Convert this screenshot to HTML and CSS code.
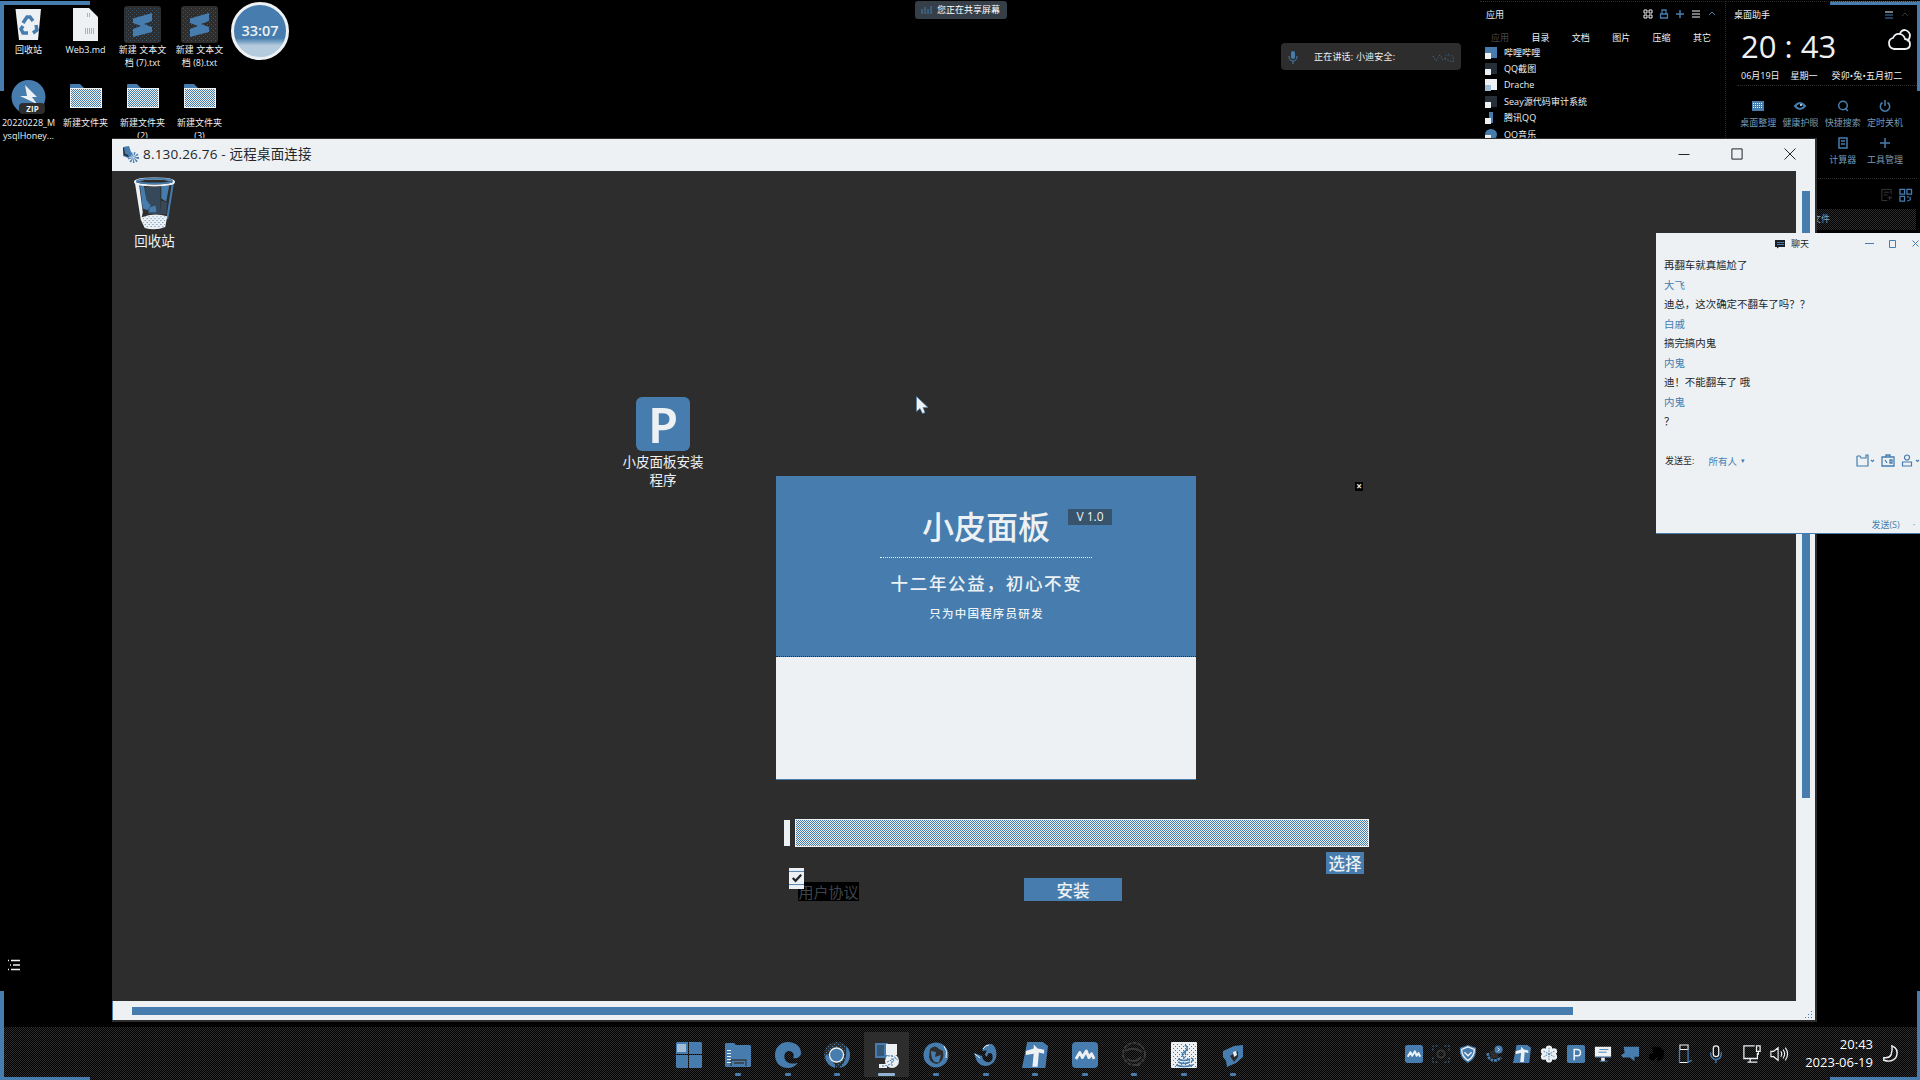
FILE: index.html
```html
<!DOCTYPE html>
<html lang="zh-CN">
<head>
<meta charset="utf-8">
<title>桌面</title>
<link rel="stylesheet" href="styles.css">
</head>
<body>
<svg width="0" height="0" class="defs">
  <pattern id="dots" width="2" height="2" patternUnits="userSpaceOnUse"><path fill="#467dae" d="M0 0h1v1H0zM1 1h1v1H1z"/></pattern>
  <pattern id="gdots" width="4" height="4" patternUnits="userSpaceOnUse"><path fill="#467dae" d="M0 0h1v1H0zM2 2h1v1H2z"/></pattern>
  <symbol id="folder" viewBox="0 0 34 26"><path class="b" d="M1 2q0-1 1-1h9l4 4h17v4H1z"/><path class="w" d="M1 5h32v20H1z"/><path fill="url(#dots)" d="M2 6h30v18H2z"/></symbol>
  <symbol id="subl" viewBox="0 0 37 37"><rect class="g" width="37" height="37" rx="3"/><rect fill="url(#gdots)" x="2" y="2" width="33" height="33" opacity=".5"/><path class="b" d="M9 12.500L28 7v8l-8 3 8 3v5L9 31v-8l8-3-8-3z"/></symbol>
  <symbol id="tool" viewBox="0 0 20 20"><path class="b" d="M4 0h12l4 3-2 17H0z"/><path class="w" d="M3 7l6-2V2l3 3 5 1v3l-4-1-1 11H8l1-10-6 1z"/></symbol>
  <symbol id="meet" viewBox="0 0 20 20"><rect class="b" width="20" height="20" rx="3"/><path fill="none" stroke="#edf1f4" stroke-width="2.200" stroke-linejoin="round" d="M3 13l3-5 2 4 3-5 2 5 2-3 2 4"/></symbol>
</svg>

<main class="desktop">
  <i class="corner tl"></i><i class="corner tr"></i>

  <section class="shortcuts">
    <div class="shortcut"><svg viewBox="0 0 37 37"><path class="w" d="M5.500 3L31 3l-3 31H9z"/><path class="ln" stroke-width="3.500" d="M13 17l4-6h3l3 4M26 19l1 5-4 3M18 27h-5l-2-4 2-3"/></svg><span>回收站</span></div>
    <div class="shortcut"><svg viewBox="0 0 37 37"><path class="w" d="M6 2h16l9 9v24H6z"/><path class="ln" stroke-width="1" stroke-dasharray="1 1" d="M20 8h4M20 10h4M18 23h9M18 25h9M18 27h9"/></svg><span>Web3.md</span></div>
    <div class="shortcut"><svg><use href="#subl"/></svg><span>新建 文本文档 (7).txt</span></div>
    <div class="shortcut"><svg><use href="#subl"/></svg><span>新建 文本文档 (8).txt</span></div>
    <div class="shortcut"><svg viewBox="0 0 37 37"><circle class="b" cx="18.500" cy="18" r="17"/><path class="w" d="M15 6l12 12h-5l5 7-17-8h7z"/><rect class="g" x="9" y="24" width="26" height="11" rx="4"/><text x="22.500" y="32.500" class="zip">ZIP</text></svg><span>20220228_M<br>ysqlHoney...</span></div>
    <div class="shortcut"><svg class="fold"><use href="#folder"/></svg><span>新建文件夹</span></div>
    <div class="shortcut"><svg class="fold"><use href="#folder"/></svg><span>新建文件夹<br>(2)</span></div>
    <div class="shortcut"><svg class="fold"><use href="#folder"/></svg><span>新建文件夹<br>(3)</span></div>
  </section>
  <div class="timer">33:07</div>
  <div class="sharing"><svg viewBox="0 0 12 10"><path class="ln" d="M1 4v5M4 2v7M7 4v5M10 1v8"/></svg><span>您正在共享屏幕</span></div>
  <div class="speaking"><svg viewBox="0 0 10 14"><rect class="b" x="3" y="1" width="4" height="8" rx="2"/><path class="ln" d="M1 6q0 5 4 5t4-5M5 11v3"/></svg><span>正在讲话: 小迪安全:</span><svg class="wave" viewBox="0 0 24 12"><path class="ln" stroke-dasharray="1 2" d="M1 5l3 5 4-6 3 5M13 8q0-5 5-4t3 7z"/></svg></div>

  <section class="apps">
    <header><b>应用</b>
      <svg viewBox="0 0 10 10"><path class="lw" d="M1 1h3v3H1zM6 1h3v3H6zM1 6h3v3H1zM6 6h3v3H6z"/></svg>
      <svg viewBox="0 0 10 10"><path class="ln" stroke-width="1.300" d="M1.500 5h7v4h-7zM3 5V1h4v4"/></svg>
      <svg viewBox="0 0 10 10"><path class="ln" stroke-width="1.500" d="M5 1v8M1 5h8"/></svg>
      <svg viewBox="0 0 10 10"><path class="lw" d="M1 2h8M1 5h8M1 8h8"/></svg>
      <svg viewBox="0 0 10 10"><path class="ln" d="M2 6l3-3 3 3"/></svg>
    </header>
    <nav><span class="dim">应用</span><span>目录</span><span>文档</span><span>图片</span><span>压缩</span><span>其它</span></nav>
    <ul>
      <li><i class="app blue"></i>哔哩哔哩</li>
      <li><i class="app dark"></i>QQ截图</li>
      <li><i class="app white"></i>Drache</li>
      <li><i class="app dark"></i>Seay源代码审计系统</li>
      <li><i class="app penguin"></i>腾讯QQ</li>
      <li><i class="app round"></i>QQ音乐</li>
    </ul>
  </section>

  <section class="helper">
    <header><b>桌面助手</b>
      <svg viewBox="0 0 10 10"><path class="lw" d="M1 2h8"/><path class="ln" d="M1 5h8M1 8h8"/></svg>
      <svg viewBox="0 0 10 10"><path class="lg" d="M2 6l3-3 3 3"/></svg>
    </header>
    <div class="now"><span>20 : 43</span><svg viewBox="0 0 26 22"><path class="lw" stroke-width="1.800" d="M7 20q-5-1-5-6 0-4 4-5 2-5 7-4 4 1 5 5 5 1 5 5 0 5-5 5zM13 5q1-4 5-4 4 1 5 5 0 4-3 6"/></svg></div>
    <div class="date"><span>06月19日</span><span>星期一</span><span>癸卯•兔•五月初二</span></div>
    <div class="tools">
      <div><svg viewBox="0 0 12 12"><path class="b" d="M0 1h12v10H0z"/><path class="lw" stroke-dasharray="1 1" d="M1 3.500h10M1 5.500h10M1 7.500h10"/></svg>桌面整理</div>
      <div><svg viewBox="0 0 12 12"><path class="ln" stroke-width="2" d="M1 6q5-6 10 0-5 6-10 0z"/><circle cx="7" cy="5" r="1" class="w"/></svg>健康护眼</div>
      <div><svg viewBox="0 0 12 12"><circle class="ln" stroke-width="1.500" cx="6" cy="5.500" r="4.300"/><path class="ln" stroke-width="1.500" d="M8 8l3 3"/></svg>快捷搜索</div>
      <div><svg viewBox="0 0 12 12"><path class="ln" stroke-width="1.500" d="M3.500 2.500a4.700 4.700 0 1 0 5 0M6 0v6"/></svg>定时关机</div>
      <div></div><div></div>
      <div><svg viewBox="0 0 12 12"><path class="ln" stroke-width="1.500" d="M2 1h8v10H2zM4 4h4M4 7h4"/></svg>计算器</div>
      <div><svg viewBox="0 0 12 12"><path class="ln" stroke-width="1.500" d="M6 1v10M1 6h10"/></svg>工具管理</div>
    </div>
    <div class="mini">
      <svg viewBox="0 0 14 14"><path class="lg" d="M12 6V1H2v12h6M4 4h6M4 7h4M8 10h5M10.500 8v5"/></svg>
      <svg viewBox="0 0 14 14"><path class="ln" stroke-width="1.400" d="M1 1h5v5H1zM8.500 1h5v5h-5zM1 8.500h5v5H1zM8.500 9h2M12 9v4M9 13h2"/></svg>
    </div>
    <div class="search">文件</div>
  </section>

  <section class="remote">
    <header class="titlebar">
      <svg class="rdp" viewBox="0 0 17 17"><path class="b" d="M1 1l6-1 3 9-4 3-5-2z"/><path class="k" d="M1 2l1 7 5 2-1-2-3-1-1-6z"/><circle class="ln" stroke-width="5" stroke-dasharray="1 1" cx="11.500" cy="11.500" r="3"/></svg>
      <h1>8.130.26.76 - 远程桌面连接</h1>
      <div class="winbtns">
        <svg viewBox="0 0 12 12"><path class="lk" d="M.500 6.500h11"/></svg>
        <svg viewBox="0 0 12 12"><path class="lk" d="M.900.900h10.200v10.200H.900z"/></svg>
        <svg viewBox="0 0 12 12"><path class="lk" d="M.500.500l11 11M11.500.500l-11 11"/></svg>
      </div>
    </header>
    <div class="screen">
      <div class="rbin"><svg viewBox="0 0 44 54"><path class="g" d="M2 4h40l-7 47-11 3-14-3z"/><path class="lb2" d="M41 5l-6 38"/><path class="w" d="M2 6h4l4 30-1 5q12-5 26-1l-2 11q-10 4-21 1l-4-8z"/><path class="b" d="M7 8h4l3 16 4 5-3 5-5-2zM29 9h8l-3 16-5-3zM17 31l6-2 1 7h-8z"/><path fill="url(#dots)" opacity=".7" d="M12 10h16v28H16zM29 24l6 2-1 12h-6z"/><path fill="url(#gdots)" d="M9 40h25l-2 12H12z"/><ellipse class="lw" stroke-width="2" cx="22" cy="5" rx="20" ry="3.500"/><ellipse class="ln" stroke-width="1.800" cx="22" cy="4" rx="18" ry="2.500"/></svg><span>回收站</span></div>
      <div class="setup"><div class="plogo">P</div><span>小皮面板安装<br>程序</span></div>
      <svg class="cursor" viewBox="0 0 12 18"><path class="w" stroke="#467dae" stroke-width=".6" d="M.500.500v15l3.500-3 2.500 5 2.500-1-2-5h5z"/></svg>
      <div class="banner">
        <div class="hero">
          <div class="brand">小皮面板<em>V 1.0</em></div>
          <div class="rule"></div>
          <p class="slogan">十二年公益，初心不变</p>
          <p class="sub">只为中国程序员研发</p>
        </div>
        <div class="pane"></div>
      </div>
      <div class="closex">×</div>
      <div class="path"><i></i><b></b></div>
      <div class="pick">选择</div>
      <div class="agree">用户协议</div>
      <div class="check"><svg viewBox="0 0 16 21"><path class="ln" d="M0 3.500h16M0 17.500h16"/><path class="lk" stroke-width="2.400" d="M4 10.500l3 3 6-6.500"/></svg></div>
      <div class="install">安装</div>
    </div>
    <div class="vbar"><i></i></div>
    <div class="hbar"><i></i></div>
    <svg class="grip" viewBox="0 0 8 8"><path class="b" d="M6 0h1v1H6zM3 3h1v1H3zM6 3h1v1H6zM0 6h1v1H0zM3 6h1v1H3zM6 6h1v1H6z"/></svg>
  </section>

  <section class="chat">
    <header><svg viewBox="0 0 10 10"><path class="k" d="M0 1h10v7H4L2 9.500V8H0z"/><path stroke="#467dae" d="M2 3.500h7M2 5.500h7"/></svg><span>聊天</span>
      <div class="cbtns"><svg viewBox="0 0 9 9"><path class="ln" d="M0 4.500h9"/></svg><svg viewBox="0 0 9 9"><path class="ln" d="M1.500 1.500h6v7h-6z"/></svg><svg viewBox="0 0 9 9"><path class="ln" d="M1.500 1.500l6 6M7.500 1.500l-6 6"/></svg></div>
    </header>
    <div class="log">
      <p>再翻车就真尴尬了</p><p class="who">大飞</p>
      <p>迪总，这次确定不翻车了吗？？</p><p class="who">白戚</p>
      <p>搞完搞内鬼</p><p class="who">内鬼</p>
      <p>迪！不能翻车了 哦</p><p class="who">内鬼</p>
      <p>？</p>
    </div>
    <div class="to"><span>发送至:</span><span class="who">所有人</span><small>▾</small>
      <svg class="push" viewBox="0 0 20 13"><path class="ln" stroke-width="1.200" d="M1 2h3l1 2h5V1h2v2M1 2v10h11V3M15 6l1.500 1.500L18 6"/></svg>
      <svg class="mid" viewBox="0 0 14 13"><path class="ln" stroke-width="1.300" d="M1 3h12v9H1zM5 3V1h4v2M4 6l2 3M9 6h2v3H9z"/></svg>
      <svg viewBox="0 0 20 13"><circle class="ln" stroke-width="1.200" cx="6" cy="3.500" r="2.500"/><path class="ln" stroke-width="1.200" d="M1.500 12V8h9v4zM15 6l1.500 1.500L18 6"/></svg>
    </div>
    <div class="send who">发送(S)<i>·</i></div>
  </section>

  <svg class="listicon" viewBox="0 0 14 12"><path class="lw" stroke-width="1.500" d="M1 1.500h1M4 1.500h9M3 6h1M6 6h7M1 10.500h1M4 10.500h9"/></svg>

  <footer class="taskbar">
    <div class="pins">
      <div class="pin nodot"><svg viewBox="0 0 26 26"><path class="b" d="M0 1l1-1h11v12H0zM13 0h12l1 1v11H13zM0 13h12v13H1l-1-1zM13 13h13v12l-1 1H13z"/><path class="wd" d="M1 2h9v8H1z"/></svg></div>
      <div class="pin"><svg viewBox="0 0 26 26"><path class="b" d="M0 2l1-1h8l2 2h14l1 1v20l-1 1H1l-1-1z"/><path class="lg" stroke-width="1.300" d="M6 24v-6h15v6M9 21h10"/><path stroke="#edf1f4" stroke-width="4" stroke-dasharray="1 2" d="M4 8v14"/></svg></div>
      <div class="pin"><svg viewBox="0 0 26 26"><path class="b" d="M13 0c8 0 13 5 13 11 0 4-4 6-8 5 2-3 0-7-4-7-5 0-6 7-3 10 3 3 7 3 12 2-3 3-6 5-10 5C5 26 0 20 0 13S5 0 13 0z"/></svg></div>
      <div class="pin"><svg viewBox="0 0 26 26"><circle class="g" cx="13" cy="13" r="13"/><circle fill="url(#gdots)" cx="13" cy="13" r="13"/><path class="b" d="M22 4a13 13 0 0 1-6 22q8-8 6-22zM3 12l8 11v3Q2 23 1 14z"/><circle cx="12.500" cy="13" r="7" fill="#467dae" stroke="#edf1f4" stroke-width="1.300"/></svg></div>
      <div class="pin active"><svg viewBox="0 0 26 26"><path class="b" d="M1 1h13v15H1z"/><path class="k" d="M3 3h7v11H3z" opacity=".4"/><path class="w" d="M12 2h11v11H12z"/><circle class="w" cx="18" cy="19" r="7"/><path class="w" d="M5 22h8v4H5z"/><path class="ln" stroke-dasharray="2 1" d="M14 14q7-1 10 5M13 20l9-4M8 24q9 0 12-6M18 13v12"/></svg></div>
      <div class="pin"><svg viewBox="0 0 26 26"><circle class="b" cx="13" cy="13" r="12.500"/><path class="g" d="M7 7q5-5 9 0l4 2q2 10-6 13-7-1-8-7z"/><path class="b" d="M8 9l5 1-1 5 6-2-2 7q-8 2-8-11z"/><path class="lw" d="M21 4q4 5 2 12"/></svg></div>
      <div class="pin"><svg viewBox="0 0 26 26"><path class="b" d="M9 9q2-8 10-7 6 5 4 14-3 8-11 8-7-1-9-7L1 11l8 3q1 7 8 6 4-3 2-8-4-3-5 3l-2-2q1-6 6-5"/><path class="lw" d="M10 7q2-4 6-4M2 12l5 4"/></svg></div>
      <div class="pin"><svg viewBox="0 0 20 20"><use href="#tool"/></svg></div>
      <div class="pin"><svg viewBox="0 0 20 20"><use href="#meet"/></svg></div>
      <div class="pin"><svg viewBox="0 0 26 26"><circle class="lg" stroke-width="2" stroke-dasharray="4 1" cx="13" cy="12" r="11"/><path class="lg" stroke-width="2" d="M4 9q9-5 17 1M6 17q8 5 14-2M12 23h7"/></svg></div>
      <div class="pin"><svg viewBox="0 0 26 26"><rect class="w" width="26" height="26" rx="1"/><path fill="url(#gdots)" d="M1 1h24v24H1z"/><path class="ln" stroke-width="1.500" d="M14 3q5 3-1 7-4 3 1 6M17 7q-5 3-2 6M7 17q6 3 12 0M7 20q6 3 12 0M5 23q8 3 17 0M20 16q4 1 0 4"/></svg></div>
      <div class="pin"><svg viewBox="0 0 26 26"><path class="b" d="M3 9l11-5 9-1v12l-7 6-9 4-1-6-3-4z"/><path class="g" d="M10 14l8-5v6l-4 5z"/><path class="w" d="M13 10l3-1 1 4-3 2z"/></svg></div>
    </div>
    <div class="tray">
      <svg viewBox="0 0 20 20"><use href="#meet"/></svg>
      <svg viewBox="0 0 20 20"><path class="ln" stroke-dasharray="2 2" d="M1 6V1h5M14 1h5v5M19 14v5h-5M6 19H1v-5"/><circle class="lg" stroke-width="2" cx="10" cy="10" r="4"/></svg>
      <svg viewBox="0 0 20 20"><path class="b" d="M10 0l9 3q1 12-9 17Q0 15 1 3z"/><path class="lw" stroke-width="1.500" d="M10 2l7 3q0 8-7 12Q3 13 3 5zM6 8l4 4 4-4"/></svg>
      <svg viewBox="0 0 20 20"><path class="ln" stroke-width="3" stroke-dasharray="3 1" d="M2 9q0 9 10 8l5-3"/><path class="g" d="M4 7l8-2 2 9-8 1z"/><circle class="b" cx="14" cy="5" r="4.500"/><path class="lw" d="M13 3l2 2-2 2"/></svg>
      <svg viewBox="0 0 20 20"><use href="#tool"/></svg>
      <svg viewBox="0 0 20 20"><g class="w"><circle cx="10" cy="4" r="3.500"/><circle cx="10" cy="16" r="3.500"/><circle cx="4.500" cy="7" r="3.500"/><circle cx="15.500" cy="7" r="3.500"/><circle cx="4.500" cy="13" r="3.500"/><circle cx="15.500" cy="13" r="3.500"/></g><circle class="w" cx="10" cy="10" r="5"/><path class="ln" stroke-dasharray="2 1" d="M10 3v14M4 7l12 6M16 7L4 13"/></svg>
      <svg viewBox="0 0 20 20"><rect class="b" width="20" height="20" rx="2"/><path class="lw" stroke-width="1.700" d="M8 17V5h3q4 0 4 3.500T11 12H8"/></svg>
      <svg viewBox="0 0 20 20"><path class="w" d="M1 2h18v11H1zM8 14h4v4H8z"/><path class="ln" d="M1 13.500h18M6 5h10M5 8h9M6 18h9"/></svg>
      <svg viewBox="0 0 20 20"><path class="b" d="M3 2h17v11h-5v5l-5-4H2l-2-3 4-2z"/></svg>
      <svg viewBox="0 0 20 20"><path fill="#000" d="M4 2l9 0 5 5-1 8-7 4 1-7-5 6-5-3 1-5 4-1z"/></svg>
      <svg viewBox="0 0 20 20" class="wide1"><path class="lw" stroke-width="1.200" d="M5.500 0h9v5h-9zM5 19.500h10"/><path class="ln" stroke-width="1.500" d="M5 5v14M14.500 5v14l4-2"/></svg>
      <svg viewBox="0 0 20 20" class="wide2"><rect class="lw" stroke-width="1.400" x="7" y="1" width="6" height="12" rx="3"/><path class="ln" stroke-width="1.500" d="M4 8q0 8 6 8t6-8M10 16v4"/></svg>
      <svg viewBox="0 0 20 20" class="wide3"><path class="lw" stroke-width="1.400" d="M13 1H1v14h15V9M5 19h11M8 15v4M15 1h4v6h-4zM17 7v4"/></svg>
      <svg viewBox="0 0 20 20" class="wide4"><path class="lw" stroke-width="1.300" d="M1 7h3l5-4v14l-5-4H1zM12 7q2 3 0 6M14.500 5q3.500 5 0 10M17 3q5 7 0 14"/></svg>
      <div class="clock">20:43<br>2023-06-19</div>
      <svg viewBox="0 0 20 20" class="moon"><path class="lw" stroke-width="1.600" d="M11 1q8 3 5 12-4 7-14 4v-3q6 1 8-3 2-5 1-10z"/></svg>
    </div>
  </footer>
  <i class="corner bl"></i><i class="corner br"></i>
</main>
</body>
</html>
```
FILE: styles.css
```css
:root{--k:#000;--g:#2d2d2d;--b:#467dae;--w:#edf1f4}
*{box-sizing:border-box;margin:0;padding:0}
body{background:#000;color:var(--w);font-family:"Open Sans","Noto Sans CJK SC",sans-serif;font-size:9px;overflow:hidden}
svg{display:block;flex:none;overflow:visible}
.defs{position:absolute}
i,em{font-style:normal}
.b{fill:var(--b)}.w{fill:var(--w)}.g{fill:var(--g)}.k{fill:#1d2024}
.ln{fill:none;stroke:var(--b)}.lw{fill:none;stroke:var(--w)}.lg{fill:none;stroke:#3a3a3a}.lk{fill:none;stroke:#23272b}
.lb2{fill:none;stroke:var(--b);stroke-width:2}
.wd{fill:#9fbdd6}
.desktop{position:relative;width:1920px;height:1080px;background:#000;overflow:hidden}
.corner{position:absolute;width:90px;height:90px;border:0 solid var(--b);pointer-events:none}
.tl{left:0;top:1px;border-width:4px 0 0 4px}
.tr{right:0;top:1px;border-width:4px 3px 0 0}
.bl{left:0;bottom:0;height:89px;border-width:0 0 3px 4px}
.br{right:0;bottom:0;height:89px;border-width:0 3px 3px 0}

.shortcuts{position:absolute;left:0;top:6px;display:grid;grid-template-columns:repeat(4,57px);grid-template-rows:73px 64px}
.shortcut{display:flex;flex-direction:column;align-items:center;line-height:13px;text-align:center}
.shortcut svg{width:37px;height:37px}
.shortcut svg.fold{width:34px;height:26px;margin:4px 0 7px}
.shortcut span{margin-top:0;width:54px}
.zip{fill:var(--w);font-size:8px;font-weight:700;text-anchor:middle}
.timer{position:absolute;left:231px;top:2px;width:58px;height:58px;border-radius:50%;border:3px solid var(--w);background:linear-gradient(var(--b) 0 64%,#b4cbdd 78%);font-size:14.500px;line-height:52px;text-align:center;font-weight:600}
.sharing{position:absolute;left:915px;top:1px;width:92px;height:18px;border-radius:3px;background:#363f47;display:flex;align-items:center;padding-left:6px;gap:4px;color:#fff;line-height:15px;padding-bottom:1px}
.sharing svg{width:12px;height:10px}
.speaking{position:absolute;left:1281px;top:43px;width:180px;height:27px;border-radius:4px;background:var(--g);display:flex;align-items:center;padding:0 5px 0 7px;gap:16px;letter-spacing:.200px}
.speaking svg{width:10px;height:14px}
.speaking .wave{width:24px;height:12px;margin-left:auto}

.apps{position:absolute;left:1480px;top:1px;width:246px;height:139px;border-top:1px dotted var(--g);border-right:1px dotted var(--g)}
.apps header{display:flex;align-items:center;gap:6px;height:24px;padding:0 8px 0 6px}
.apps b,.helper b{font-weight:400;margin-right:auto}
.apps header svg,.helper header svg{width:10px;height:10px}
.apps nav{display:flex;justify-content:space-between;padding:0 14px 0 11px;line-height:24px;height:18px}
.dim{color:#484848}
.apps ul{list-style:none}
.apps li{display:flex;align-items:center;height:16.400px;padding-left:5px;gap:7px;letter-spacing:.060px}
.app{position:relative;width:12px;height:11px;background:var(--b)}
.app::after{content:"";position:absolute;left:0;bottom:-1px;width:6px;height:6px;background:var(--w)}
.app.dark{background:#262f37}.app.white{background:var(--w)}.app.white::after{background:#9fbdd6}
.app.penguin{background:linear-gradient(90deg,#000 30%,var(--b) 30% 70%,#000 70%)}
.app.round{border-radius:50%}

.helper{position:absolute;left:1726px;top:1px;width:191px;height:232px;border-top:1px dotted var(--g)}
.helper header{display:flex;align-items:center;height:25px;padding:0 7px 0 8px;gap:6px}
.now{display:flex;justify-content:space-between;height:40px;padding:0 4px 0 15px;font-size:31px;line-height:38px}
.now svg{width:26px;height:22px;margin-top:2px}
.date{display:flex;gap:11px;padding:0 0 0 15px;height:18px;line-height:17px;white-space:nowrap}
.date span:last-child{margin-left:3px;letter-spacing:.100px}
.tools{display:grid;grid-template-columns:repeat(4,42.300px);grid-auto-rows:37px;margin-left:11px;padding-top:14px;border-top:1px dotted var(--g);height:93px;color:#7799b5}
.tools div{display:flex;flex-direction:column;align-items:center;gap:4px;line-height:13px}
.tools svg{width:12px;height:12px}
.mini{display:flex;justify-content:flex-end;gap:6px;padding:9px 5px 0 0;height:31px;border-top:1px dotted var(--g)}
.mini svg{width:13px;height:14px}
.search{height:21px;margin-right:1px;padding-left:86px;background:conic-gradient(#2d2d2d 25%,#000 0 50%,#2d2d2d 0 75%,#000 0) 0 0/2px 2px;color:#7da2c1;line-height:20px}

.remote{position:absolute;left:112px;top:138px;width:1705px;height:884px;display:grid;grid-template-columns:1684px 19px;grid-template-rows:33px 830px 19px;background:var(--w);border:solid var(--g);border-width:0 2px 2px 0;color:var(--w)}
.titlebar{grid-column:1/3;display:flex;align-items:center;padding:0 19px 2px 10px;border-top:1px solid var(--g);color:#23272b}
.rdp{width:17px;height:17px;margin-right:4px}
.titlebar h1{font-size:13.500px;font-weight:400;line-height:30px;letter-spacing:.200px;white-space:pre}
.winbtns{display:flex;gap:41px;margin-left:auto}
.winbtns svg{width:12px;height:12px}
.screen{position:relative;background:var(--g)}
.vbar{padding:20px 0 0 6px}.vbar i{display:block;width:8px;height:607px;background:var(--b)}
.hbar{grid-column:1/3;padding:6px 0 0 19px;border-left:1px solid var(--b)}.hbar i{display:block;width:1441px;height:8px;background:var(--b)}
.grip{position:absolute;right:2px;bottom:1px;width:8px;height:8px}
.rbin{position:absolute;left:21px;top:6px;width:43px;text-align:center;font-size:13.500px;line-height:20px;white-space:nowrap}
.rbin svg{width:43px;height:53px;margin-bottom:1px}
.setup{position:absolute;left:507px;top:226px;width:88px;font-size:13.500px;line-height:18px;text-align:center}
.plogo{width:54px;height:54px;margin:0 auto 2px;border-radius:6px;background:var(--b);font:600 49px/54px "Noto Sans",sans-serif}
.cursor{position:absolute;left:804px;top:225px;width:12px;height:18px}
.banner{position:absolute;left:664px;top:305px;width:420px}
.hero{height:181px;background:var(--b);display:flex;flex-direction:column;align-items:center;padding-top:29px;border-bottom:1px dotted var(--g)}
.brand{position:relative;font-size:32px;line-height:44px;font-weight:500}
.brand em{position:absolute;left:146px;top:4px;width:44px;height:16px;background:#38536c;font-size:12px;line-height:16px;text-align:center;font-weight:400;white-space:nowrap}
.rule{width:212px;margin-top:8px;border-top:1px dotted var(--w)}
.slogan{font-size:17.500px;letter-spacing:1.700px;line-height:28px;margin-top:11px;padding-left:1px;font-weight:500}
.sub{font-size:11.500px;letter-spacing:1.200px;line-height:20px;margin-top:7px;padding-left:1px;font-weight:500}
.pane{height:123px;background:var(--w);border-bottom:1px solid var(--b)}
.closex{position:absolute;left:1243px;top:311px;width:8px;height:9px;background:#000;font-size:10px;font-weight:700;line-height:8px;text-align:center}
.path{position:absolute;left:672px;top:648px;width:585px;height:28px;display:flex;gap:5px}
.path i{width:6px;margin:1px 0;background:var(--w)}
.path b{flex:1;border:1px solid var(--w);background:conic-gradient(var(--w) 25%,var(--b) 0 50%,var(--w) 0 75%,var(--b) 0) 0 0/2px 2px}
.pick{position:absolute;left:1214px;top:681px;width:38px;height:22px;background:var(--b);font-size:16.500px;line-height:24px;text-align:center;font-weight:500}
.agree{position:absolute;left:686px;top:711px;width:61px;height:19px;background:#000;color:#3d444a;font-size:15px;line-height:20px;text-align:center}
.check{position:absolute;left:677px;top:697px;width:15px;height:21px;background:var(--w)}
.check svg{width:15px;height:20px}
.install{position:absolute;left:912px;top:707px;width:98px;height:23px;background:var(--b);font-size:16.500px;line-height:25px;text-align:center;font-weight:500}

.chat{position:absolute;left:1656px;top:233px;width:264px;height:301px;background:var(--w);border-bottom:1px solid var(--b);color:#23272b;overflow:hidden;display:flex;flex-direction:column}
.chat header{display:flex;align-items:center;height:22px;padding:0 0 1px 119px;gap:6px}
.chat header>svg{width:10px;height:10px}
.cbtns{display:flex;gap:14px;margin-left:auto}
.cbtns svg{width:9px;height:9px}
.log{padding:1px 0 0 8px;font-size:10.450px;line-height:19.500px;height:193px}
.who{color:var(--b)}
.to{display:flex;align-items:center;padding-left:9px;height:25px}
.to .who{margin-left:14px;font-size:9.500px}.to small{font-size:7px;margin-left:4px;color:var(--b)}
.to .push{margin-left:auto}
.to svg{width:20px;height:13px}.to .mid{width:14px;margin:0 6px 0 5px}
.to svg:last-child{margin-right:-1px}
.send{margin-top:auto;text-align:right;padding-right:5px;line-height:17px}
.send i{margin-left:13px}
.listicon{position:absolute;left:7px;top:959px;width:14px;height:12px}

.taskbar{position:absolute;left:0;top:1027px;width:1920px;height:53px;display:flex;background:conic-gradient(#2d2d2d 25%,#000 0 50%,#2d2d2d 0 75%,#000 0) 0 0/2px 2px}
.pins{display:flex;margin-left:664px}
.pin{width:49.500px;display:flex;flex-direction:column;align-items:center;padding-top:15px}
.pin svg{width:26px;height:26px}
.pin::after{content:"";width:6px;height:3px;border-radius:1px;margin-top:5px;background:var(--b)}
.pin.nodot::after{display:none}
.pin.active{background:linear-gradient(var(--g),var(--g)) center 5px/45px 45px no-repeat}
.pin.active::after{width:17px;background:#8fb3d1}
.tray{display:flex;align-items:center;margin-left:147px;gap:9px}
.tray svg{width:18px;height:18px}
.tray .wide2{margin-left:5px}.tray .wide3{margin-left:9px}
.clock{font-size:13px;line-height:17.500px;text-align:right;width:76px;color:#fff}
.tray .moon{margin-left:0}
```
